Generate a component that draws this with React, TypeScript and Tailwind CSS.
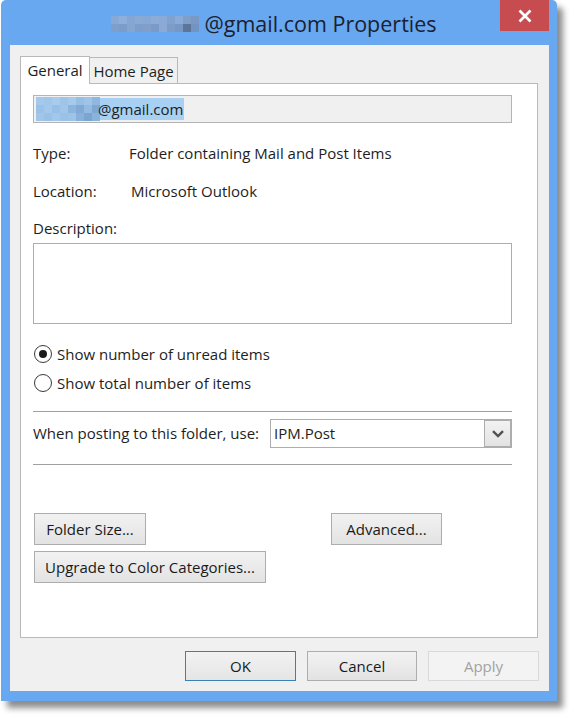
import { ReactNode } from 'react'

const font = "font-['Open_Sans','Noto_Sans',sans-serif]"

// pixelated blur where the account name was hidden
function Mosaic({ cells, size }: { cells: string[][]; size: number }) {
  const w = cells[0].length * size
  const h = cells.length * size
  return (
    <svg width={w} height={h} viewBox={`0 0 ${w} ${h}`} className="block">
      {cells.map((row, y) =>
        row.map((c, x) => (
          <rect key={`${x}-${y}`} x={x * size} y={y * size} width={size} height={size} fill={c} />
        ))
      )}
    </svg>
  )
}

const titleCells = [
  ['#88a9d6', '#8eafdb', '#84a6d3', '#8aaad6', '#86a8d5', '#8dacd8', '#89aad6', '#80a2cf', '#8aabd8', '#7f9fcb', '#7899c6'],
  ['#7e9fcc', '#7b9cc9', '#86a6d2', '#7d9ecb', '#829fcb', '#7a9bc8', '#8ba9d4', '#7d9cc8', '#7798c5', '#5d7598', '#7294c2'],
]

const mailCells = [
  ['#a5c9ec', '#a0c6ea', '#a9ccee', '#9fc4e8', '#a6c9ec', '#97bee4', '#9ec4e8', '#8fb8e0'],
  ['#9bc2e6', '#a4c8eb', '#98bfe5', '#a2c6e9', '#8cb5dd', '#80aad5', '#93bae0', '#7ea8d2'],
  ['#a2c6e9', '#99c0e5', '#a3c7ea', '#9ac1e6', '#9dc3e7', '#87b0da', '#7aa5d0', '#8ab3dc'],
]

function Btn({ children, w, focus, disabled }: { children: ReactNode; w: string; focus?: boolean; disabled?: boolean }) {
  const tone = disabled
    ? 'border-[#d9d9d9] bg-[#f3f3f3] text-[#a2a2a2]'
    : focus
      ? 'border-[#3c7fb1] bg-gradient-to-b from-[#f2f2f2] to-[#e5e5e5] text-[#1a1a1a]'
      : 'border-[#adadad] bg-gradient-to-b from-[#f2f2f2] to-[#e3e3e3] text-[#1a1a1a]'
  return (
    <div className={`${w} border flex items-center justify-center text-[15px] ${tone}`}>{children}</div>
  )
}

function Radio({ checked, label }: { checked?: boolean; label: string }) {
  return (
    <div className="flex items-center h-[20px]">
      <div className="ml-px w-[18px] h-[18px] rounded-full border border-[#3a3a3a] bg-white flex items-center justify-center">
        {checked && <div className="w-[8px] h-[8px] rounded-full bg-[#1a1a1a]" />}
      </div>
      <span className="ml-[5px]">{label}</span>
    </div>
  )
}

export default function App() {
  return (
    <div className={`w-[574px] h-[718px] bg-white ${font}`}>
      <div className="ml-px w-[556px] h-[701px] bg-[#68a8f0] rounded-t-[5px] flex flex-col shadow-[6px_7px_6px_rgba(0,0,0,0.45)]">
        <div className="relative h-[45px] flex items-center justify-center">
          <div className="flex items-center -ml-[10px] mt-[3px]">
            <Mosaic cells={titleCells} size={8} />
            <span className="ml-[5px] text-[21.5px] text-[#1b2130] leading-none">@gmail.com Properties</span>
          </div>
          <div className="absolute right-[8px] top-0 w-[49px] h-[31px] bg-[#c74c50] flex items-center justify-center">
            <svg width="14" height="14" viewBox="0 0 14 14">
              <path d="M1.5 1.5 L12.5 12.5 M12.5 1.5 L1.5 12.5" stroke="white" strokeWidth="2.6" />
            </svg>
          </div>
        </div>

        <div className="ml-[9px] mr-[8px] mb-[10px] flex-1 bg-[#f0f0f0] flex flex-col pt-[11px] px-[10px] pb-[10px] text-[15px] text-[#1e1e1e]">
          <div className="flex h-[27px] items-end pl-0 relative z-10">
            <div className="w-[70px] h-[28px] bg-white border border-b-0 border-[#b9b9b9] flex items-start justify-center pt-[2px] -mb-px">
              General
            </div>
            <div className="w-[88px] h-[26px] bg-[#f0f0f0] border border-l-0 border-b-0 border-[#b9b9b9] flex items-start justify-center pt-[2px]">
              Home Page
            </div>
          </div>

          <div className="mr-px flex-1 bg-white border border-[#b9b9b9] flex flex-col pl-[12px] pr-[25px] pt-[11px]">
            <div className="h-[28px] border border-[#b4b4b4] bg-[#f0f0f0] flex items-center pl-[2px]">
              <div className="flex items-center h-[22px] bg-[#a8d0f3]">
                <Mosaic cells={mailCells} size={8} />
                <span className="-ml-[2px] pr-[1px]">@gmail.com</span>
              </div>
            </div>

            <div className="mt-[20px] h-[20px] flex items-center">
              <span className="w-[96px]">Type:</span>
              <span>Folder containing Mail and Post Items</span>
            </div>
            <div className="mt-[18px] h-[20px] flex items-center">
              <span className="w-[98px]">Location:</span>
              <span>Microsoft Outlook</span>
            </div>
            <div className="mt-[17px] h-[20px] flex items-center">Description:</div>
            <div className="mt-[5px] h-[81px] border border-[#adadad] bg-white" />

            <div className="mt-[20px]">
              <Radio checked label="Show number of unread items" />
            </div>
            <div className="mt-[9px]">
              <Radio label="Show total number of items" />
            </div>

            <div className="mt-[18px] h-px bg-[#a0a0a0]" />

            <div className="mt-[7px] h-[29px] flex items-center">
              <span className="w-[237px]">When posting to this folder, use:</span>
              <div className="flex-1 h-[29px] border border-[#adadad] bg-white flex items-center justify-between pl-[3px]">
                <span>IPM.Post</span>
                <div className="w-[27px] h-[27px] border border-[#adadad] bg-gradient-to-b from-[#f2f2f2] to-[#e3e3e3] flex items-center justify-center">
                  <svg width="12" height="8" viewBox="0 0 12 8">
                    <path d="M1 1.2 L6 6 L11 1.2" stroke="#505050" strokeWidth="2.4" fill="none" />
                  </svg>
                </div>
              </div>
            </div>

            <div className="mt-[16px] h-px bg-[#a0a0a0]" />

            <div className="mt-[48px] flex">
              <div className="ml-px h-[32px] flex">
                <Btn w="w-[112px]">Folder Size...</Btn>
              </div>
              <div className="ml-[185px] h-[32px] flex">
                <Btn w="w-[111px]">Advanced...</Btn>
              </div>
            </div>
            <div className="mt-[6px] ml-px h-[32px] flex">
              <Btn w="w-[232px]">Upgrade to Color Categories...</Btn>
            </div>
          </div>

          <div className="mt-[13px] h-[30px] flex justify-end gap-[11px]">
            <Btn w="w-[111px]" focus>OK</Btn>
            <Btn w="w-[110px]">Cancel</Btn>
            <Btn w="w-[111px]" disabled>Apply</Btn>
          </div>
        </div>
      </div>
    </div>
  )
}
